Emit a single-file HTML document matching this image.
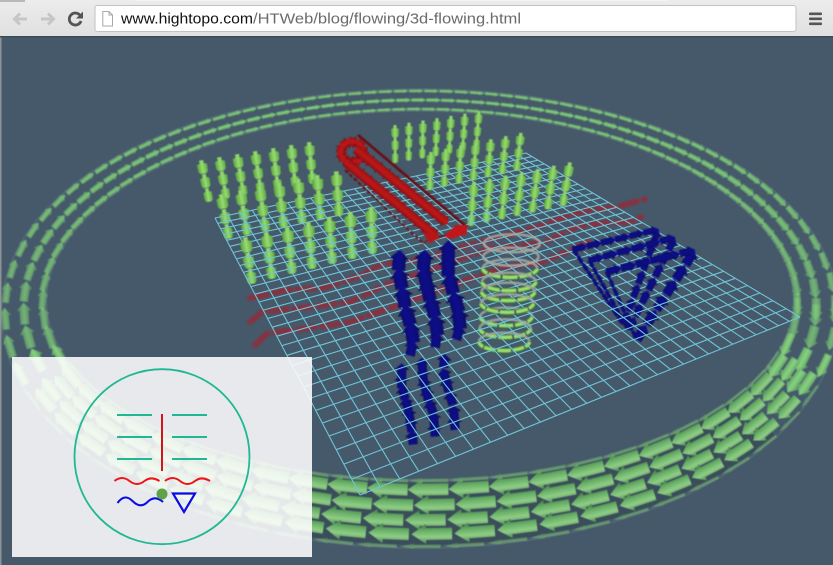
<!DOCTYPE html>
<html><head><meta charset="utf-8"><title>3d-flowing</title>
<style>
html,body{margin:0;padding:0;background:#45596a;width:833px;height:565px;overflow:hidden}
svg{display:block;position:absolute;left:0;top:0}
</style></head><body>
<svg id="s" width="833" height="565" viewBox="0 0 833 565" xmlns="http://www.w3.org/2000/svg">
<defs>
<linearGradient id="gR" x1="0" y1="0" x2="0" y2="1"><stop offset="0" stop-color="#488850"/><stop offset=".35" stop-color="#90cd87"/><stop offset=".65" stop-color="#69b067"/><stop offset="1" stop-color="#3f7748"/></linearGradient>
<linearGradient id="gB" x1="0" y1="0" x2="0" y2="1"><stop offset="0" stop-color="#578f60"/><stop offset=".5" stop-color="#86d47e"/><stop offset="1" stop-color="#578f60"/></linearGradient>
<linearGradient id="gG" x1="0" y1="0" x2="0" y2="1"><stop offset="0" stop-color="#55a03a"/><stop offset=".5" stop-color="#98dc72"/><stop offset="1" stop-color="#5aa541"/></linearGradient>
<linearGradient id="gBl" x1="0" y1="0" x2="0" y2="1"><stop offset="0" stop-color="#060658"/><stop offset=".5" stop-color="#111190"/><stop offset="1" stop-color="#05054c"/></linearGradient>
<linearGradient id="gRd" x1="0" y1="0" x2="0" y2="1"><stop offset="0" stop-color="#7c0e12"/><stop offset=".5" stop-color="#c2161a"/><stop offset="1" stop-color="#720c10"/></linearGradient>
<linearGradient id="tb" x1="0" y1="0" x2="0" y2="1"><stop offset="0" stop-color="#ececec"/><stop offset="1" stop-color="#e0e0e0"/></linearGradient>
<filter id="b1" x="-5%" y="-5%" width="110%" height="110%"><feGaussianBlur stdDeviation=".7"/></filter>
<filter id="b2" x="-5%" y="-5%" width="110%" height="110%"><feGaussianBlur stdDeviation=".4"/></filter>
</defs>
<rect width="833" height="565" fill="#45596a"/>
<rect x="0" y="37" width="1.5" height="528" fill="#8d9296"/>
<path id="band" fill="#33444f" fill-opacity=".55"/>
<g id="ringB" filter="url(#b1)"></g>
<g id="ringF" filter="url(#b2)"></g>
<g id="waves" filter="url(#b1)" fill="none" stroke="#8f2f3e" stroke-width="6" stroke-linecap="round" stroke-linejoin="round" stroke-dasharray="17 7" opacity=".85">
<path d="M250 298L287 290 323 288 357 277 383 264 417 260 470 245 533 228 580 212 620 206 645 199"/>
<path d="M250 322L262 312 310 307 350 302 385 285 430 270 490 248 543 243 576 227 600 223 633 222 641 217"/>
<path d="M255 345L268 333 310 328 350 322 385 310 440 290 500 268 543 262 566 252 593 240"/>
</g>
<g id="under" filter="url(#b2)"></g>
<g id="grid" stroke="#6fc4d6" stroke-width="1.1" fill="none"></g>
<g id="over" filter="url(#b2)"></g>

<rect x="12" y="357" width="300" height="200" fill="#fff" fill-opacity=".87"/>
<g fill="none">
<circle cx="162" cy="456.7" r="87.5" stroke="#1fb893" stroke-width="1.8"/>
<path d="M117 415H152M172 415H207M117 437H152M172 437H207M117 459H152M172 459H207" stroke="#1fb893" stroke-width="2"/>
<path d="M162 414V471" stroke="#d3141a" stroke-width="2"/>
<path d="M114.500 481c5-4 10-4 15 0s10 4 15 0 10-3 15 0M165 481c5-4 10-4 15 0s10 4 15 0 10-3 15 0" stroke="#f01418" stroke-width="2"/>
<path d="M117.500 503c5-7 10-7 15-2s10 6 15 1 10-5 15.500 0" stroke="#0a0ae6" stroke-width="2"/>
<path d="M173 493.500H195L184 512Z" stroke="#0a0ae6" stroke-width="2.200"/>
</g>
<circle cx="162" cy="494" r="5.500" fill="#5fa346"/>

<rect x="0" y="0" width="833" height="36" fill="url(#tb)"/>
<rect x="0" y="0" width="25" height="2" fill="#b9b9b9"/>
<rect x="135" y="0" width="532" height="1" fill="#f4f4f4"/>
<rect x="0" y="36" width="833" height="1.500" fill="#3d4a55"/>
<rect x="95" y="5.500" width="701" height="26" rx="2.500" fill="#fff" stroke="#c2c2c2"/>
<g fill="none" stroke-linecap="butt">
<path d="M27 19H14.500M20 13.500L14.500 19 20 24.500" stroke="#c6c6c6" stroke-width="3"/>
<path d="M41 19H53.500M48 13.500L53.500 19 48 24.500" stroke="#c6c6c6" stroke-width="3"/>
<path d="M80.500 16A6 6 0 1 0 81 21" stroke="#555" stroke-width="2.800"/>
<path d="M102.800 11.500H109L112.500 15V26H102.800Z" fill="#fff" stroke="#a8a8a8"/>
<path d="M109 11.500V15H112.500" stroke="#a8a8a8"/>
</g>
<path d="M83 11.500V18.500H76Z" fill="#555"/>
<g fill="#555"><rect x="809" y="12.500" width="13" height="2.600" rx="1"/><rect x="809" y="17.500" width="13" height="2.600" rx="1"/><rect x="809" y="22.500" width="13" height="2.600" rx="1"/></g>
<text x="121" y="23.500" font-family="'Liberation Sans',sans-serif" font-size="15" fill="#111" textLength="132" lengthAdjust="spacingAndGlyphs">www.hightopo.com</text>
<text x="253" y="23.500" font-family="'Liberation Sans',sans-serif" font-size="15" fill="#6a6a6a" textLength="268" lengthAdjust="spacingAndGlyphs">/HTWeb/blog/flowing/3d-flowing.html</text>
</svg>
<script>
var B='',F='',U='',O='',G='';
function ar(x,y,a,L,w,f,op,hl,sr){
  hl=hl||.36;sr=sr||.3;var h=L/2,n=L/2-L*hl,hw=w/2,sw=w*sr;
  var p=[[h,0],[n,hw],[n,sw],[-h,sw],[-h,-sw],[n,-sw],[n,-hw]].map(function(q){return q[0].toFixed(1)+','+q[1].toFixed(1)}).join(' ');
  return '<polygon points="'+p+'" fill="url(#'+f+')"'+(op<1?' opacity="'+op+'"':'')+' transform="translate('+x.toFixed(1)+' '+y.toFixed(1)+') rotate('+(a*180/Math.PI).toFixed(1)+')"/>';
}
function bottle(x,y,a,L,w){
  var h=L/2,W=w/2,q=W*.55;
  var d='M'+h+' '+(-q*.8)+'L'+h+' '+(q*.8)+'L'+(h-L*.22)+' '+(q*.7)+'L'+(h-L*.32)+' '+W+'L'+(-h*.7)+' '+(W*.92)+'L'+(-h)+' '+(q)+'L'+(-h)+' '+(-q)+'L'+(-h*.7)+' '+(-W*.92)+'L'+(h-L*.32)+' '+(-W)+'L'+(h-L*.22)+' '+(-q*.7)+'Z';
  return '<path d="'+d+'" fill="url(#gG)" transform="translate('+x.toFixed(1)+' '+y.toFixed(1)+') rotate('+(a*180/Math.PI).toFixed(1)+')"/>';
}
/* ring */
var cx=420,cy=307,rx=396,ry=207;
function sc(t){return .41+.88*t;}
function ringRow(off,wf,ph,tmin,tmax,op0){
  var th=ph*.05;
  while(th<Math.PI*2+ph*.05-.005){
    var c=Math.cos(th),s=Math.sin(th),t=(1+s)/2,k=sc(t);
    var nx=ry*c,ny=rx*s,nn=Math.hypot(nx,ny);
    var x=cx+rx*c+nx/nn*off*k,y=cy+ry*s+ny/nn*off*k;
    var L=15+27*t*t,w=(5+5*c*c+15*t*t)*wf;
    var a=Math.atan2(ry*c,-rx*s);
    if(t>=tmin&&t<tmax){
      if(t<.7)B+=ar(x,y,a,L*.98,w,'gB',op0*(t<.6?(.72+.28*Math.abs(s)):1));
      else F+=ar(x,y,a,L*.97,w,'gR',op0);
    }
    th+=L/Math.hypot(rx*s,ry*c);
  }
}
[[-22,.85,.2],[0,1.05,.8],[22,.85,.5]].forEach(function(r){ringRow(r[0],r[1],r[2],0,.66,1);});
[[-19,1,.3],[-7,1,.0],[4.6,1,.45],[15.5,1,.15]].forEach(function(r){ringRow(r[0],r[1],r[2],.66,1.01,1);});
[[-26,.28,.3],[25,.28,.7]].forEach(function(r){ringRow(r[0],r[1],r[2],.66,1.01,.55);});
/* dark band behind the near part of the ring */
(function(){
  var o=[],n=[];
  for(var i=0;i<=60;i++){
    var th=.55+(Math.PI-1.1)*i/60,c=Math.cos(th),s=Math.sin(th),k=sc((1+s)/2),nx=ry*c,ny=rx*s,nn=Math.hypot(nx,ny);
    o.push((cx+rx*c+nx/nn*24*k).toFixed(1)+' '+(cy+ry*s+ny/nn*24*k).toFixed(1));
    n.unshift((cx+rx*c-nx/nn*24*k).toFixed(1)+' '+(cy+ry*s-ny/nn*24*k).toFixed(1));
  }
  document.getElementById('band').setAttribute('d','M'+o.join('L')+'L'+n.join('L')+'Z');
})();
/* faint ring edges */
[[-26.5,.3],[26.5,.3]].forEach(function(r){
  var d='';
  for(var i=0;i<=180;i++){var th=i/180*Math.PI*2,c=Math.cos(th),s=Math.sin(th),k=sc((1+s)/2),nx=ry*c,ny=rx*s,nn=Math.hypot(nx,ny);
    d+=(i?'L':'M')+(cx+rx*c+nx/nn*r[0]*k).toFixed(1)+' '+(cy+ry*s+ny/nn*r[0]*k).toFixed(1);}
  B+='<path d="'+d+'" fill="none" stroke="#a8d2b0" stroke-opacity="'+r[1]+'" stroke-width=".8"/>';
});
/* grid homography */
var A=[215,218],Bq=[526,153],C=[800,317],D=[360,495];
var dx1=Bq[0]-C[0],dx2=D[0]-C[0],sx=A[0]-Bq[0]+C[0]-D[0],dy1=Bq[1]-C[1],dy2=D[1]-C[1],sy=A[1]-Bq[1]+C[1]-D[1];
var den=dx1*dy2-dx2*dy1,g=(sx*dy2-dx2*sy)/den,h=(dx1*sy-sx*dy1)/den;
var a1=Bq[0]-A[0]+g*Bq[0],b1=D[0]-A[0]+h*D[0],a2=Bq[1]-A[1]+g*Bq[1],b2=D[1]-A[1]+h*D[1];
function P(u,v){var w=g*u+h*v+1;return ((a1*u+b1*v+A[0])/w).toFixed(1)+' '+((a2*u+b2*v+A[1])/w).toFixed(1);}
var N=30,d='';
for(var i=0;i<=N;i++){var q=i/N;d+='M'+P(q,0)+'L'+P(q,1)+'M'+P(0,q)+'L'+P(1,q);}
G='<path d="'+d+'"/>';
/* green columns */
function row(x0,y0,dx,dy,n,H,w){
  for(var i=0;i<n;i++){
    var x=x0+dx*i,y=y0+dy*i,lean=(400-x)*.001,an=Math.atan2(-1,-lean);
    for(var k=0;k<3;k++){
      var l=H/3,yy=y+l*(k+.5),xx=x+lean*l*(k+.5);
      var ww=w*(k==0?1:(k==1?.95:.85));
      var m=bottle(xx,yy,an,l*.98,ww);
      if(k==0||y+l*k<205)O+=m;else U+=m;
    }
  }
}
row(201,160,18,-3,7,42,10.500);
row(221,194,19.200,-3.800,7,45,11.500);
row(245,237,21,-5,7,47,12);
row(395,125,14,-2.300,7,38,8);
row(431,152,15,-3.200,7,38,9);
row(474,182,16,-3.300,7,44,9.500);
/* coil */
var rings=[[130,0],[170,0],[205,1],[245,1],[275,1],[310,1],[350,1],[385,1],[425,1]];
rings.forEach(function(r,i){
  var y=200+r[0]/3,x=512-(r[0]-130)/300*8,ra=28-i*.35,rb=9;
  var back='<path d="M'+(x-ra)+' '+y+'A'+ra+' '+rb+' 0 0 1 '+(x+ra)+' '+y+'" fill="none" stroke="#a5a8a0" stroke-width="2.600" opacity=".85"/>';
  var s='';
  if(!r[1])s='<path d="M'+(x-ra)+' '+y+'A'+ra+' '+rb+' 0 0 0 '+(x+ra)+' '+y+'" fill="none" stroke="#a7a9a2" stroke-width="2.600" opacity=".9"/>';
  else{
    for(var j=0;j<5;j++){
      var t1=Math.PI*(1-j/5-.012),t2=Math.PI*(1-(j+1)/5+.012);
      var x1=x+ra*Math.cos(t1),y1=y+rb*Math.sin(t1),x2=x+ra*Math.cos(t2),y2=y+rb*Math.sin(t2);
      var pth='M'+x1.toFixed(1)+' '+y1.toFixed(1)+'A'+ra+' '+rb+' 0 0 0 '+x2.toFixed(1)+' '+y2.toFixed(1);
      s+='<path d="'+pth+'" fill="none" stroke="#3f7d35" stroke-width="5.500"/><path d="'+pth+'" fill="none" stroke="#9adc6e" stroke-width="3.200"/>';
    }
  }
  if(i>5)U+=back+s;else O+=back+s;
});
/* polyline arrows */
function along(pts,size,w,f,step,dest,sr){
  for(var i=0;i<pts.length-1;i++){
    var a=pts[i],b=pts[i+1],dd=Math.hypot(b[0]-a[0],b[1]-a[1]),n=Math.max(1,Math.round(dd/step)),an=Math.atan2(b[1]-a[1],b[0]-a[0]);
    for(var k=0;k<n;k++){
      var x=a[0]+(b[0]-a[0])*(k+.5)/n,y=a[1]+(b[1]-a[1])*(k+.5)/n;
      var m=ar(x,y,an,size,w,f,1,.45,sr||.36);
      if(dest==='auto'){if(y>300)U+=m;else O+=m;}else if(dest==='U')U+=m;else O+=m;
    }
  }
}
/* blue columns (coords in crop space origin 380,200 x3) */
function cp(a){return a.map(function(p){return [380+p[0]/3,200+p[1]/3];});}
[[[100,425],[90,370],[75,320],[65,260],[55,210],[60,150]],
 [[172,400],[165,350],[148,290],[130,210],[135,150]],
 [[240,380],[235,330],[220,280],[205,220],[205,130]]].forEach(function(p){along(cp(p),21,20,'gBl',18,'O',.33);});
[[[90,465],[100,425]],[[165,440],[172,400]],[[230,415],[240,380]]].forEach(function(p){along(cp(p),15,16,'gBl',13,'O',.3);});
[[[100,735],[95,690],[85,630],[65,560],[65,495]],
 [[165,705],[160,640],[145,600],[130,540],[125,480]],
 [[225,685],[220,620],[205,570],[190,510],[195,455]]].forEach(function(p){along(cp(p),14,15,'gBl',12.500,'U',.3);});
/* blue triangles */
[[[580,148],[835,88],[730,375]],[[628,182],[885,112],[745,390]],[[680,215],[945,150],[770,420]]].forEach(function(t,i){
  var q=cp(t);
  along([q[2],q[1]],i==2?17:14,i==2?16:11+i,'gBl',i==2?17:15,'auto',.3);
  along([q[0],q[2]],10,4.500,'gBl',9,'auto',.4);
  along([q[0],q[1]],16,9+i,'gBl',15,'O',.34);
});
/* red frame */
var fr='<g fill="none" stroke="#6a0f12" stroke-width="2.600"><path d="M358 135L467 227"/><path d="M345 170L423 243" stroke-dasharray="4 2" stroke-width="2"/><path d="M423 243L467 227" stroke-width="1.500"/></g>';
O+=fr;
/* red end ring */
for(var i=0;i<9;i++){var an=i/9*Math.PI*2,x=352+11*Math.cos(an),y=152+10*Math.sin(an);O+=ar(x,y,an+1.57,11,13,'gRd',1,.5,.34);}
along([[357,150],[447,223]],14,14,'gRd',11,'O',.34);
along([[347,163],[437,237]],14,14,'gRd',11,'O',.34);
O+='<polygon points="444,236 456,225 467,225 467,234 450,239" fill="#c0161a"/><polygon points="423,234 431,232 440,238 430,243" fill="#b81418"/>';
document.getElementById('ringB').innerHTML=B;
document.getElementById('ringF').innerHTML=F;
document.getElementById('under').innerHTML=U;
document.getElementById('grid').innerHTML=G;
document.getElementById('over').innerHTML=O;
</script>
</body></html>
